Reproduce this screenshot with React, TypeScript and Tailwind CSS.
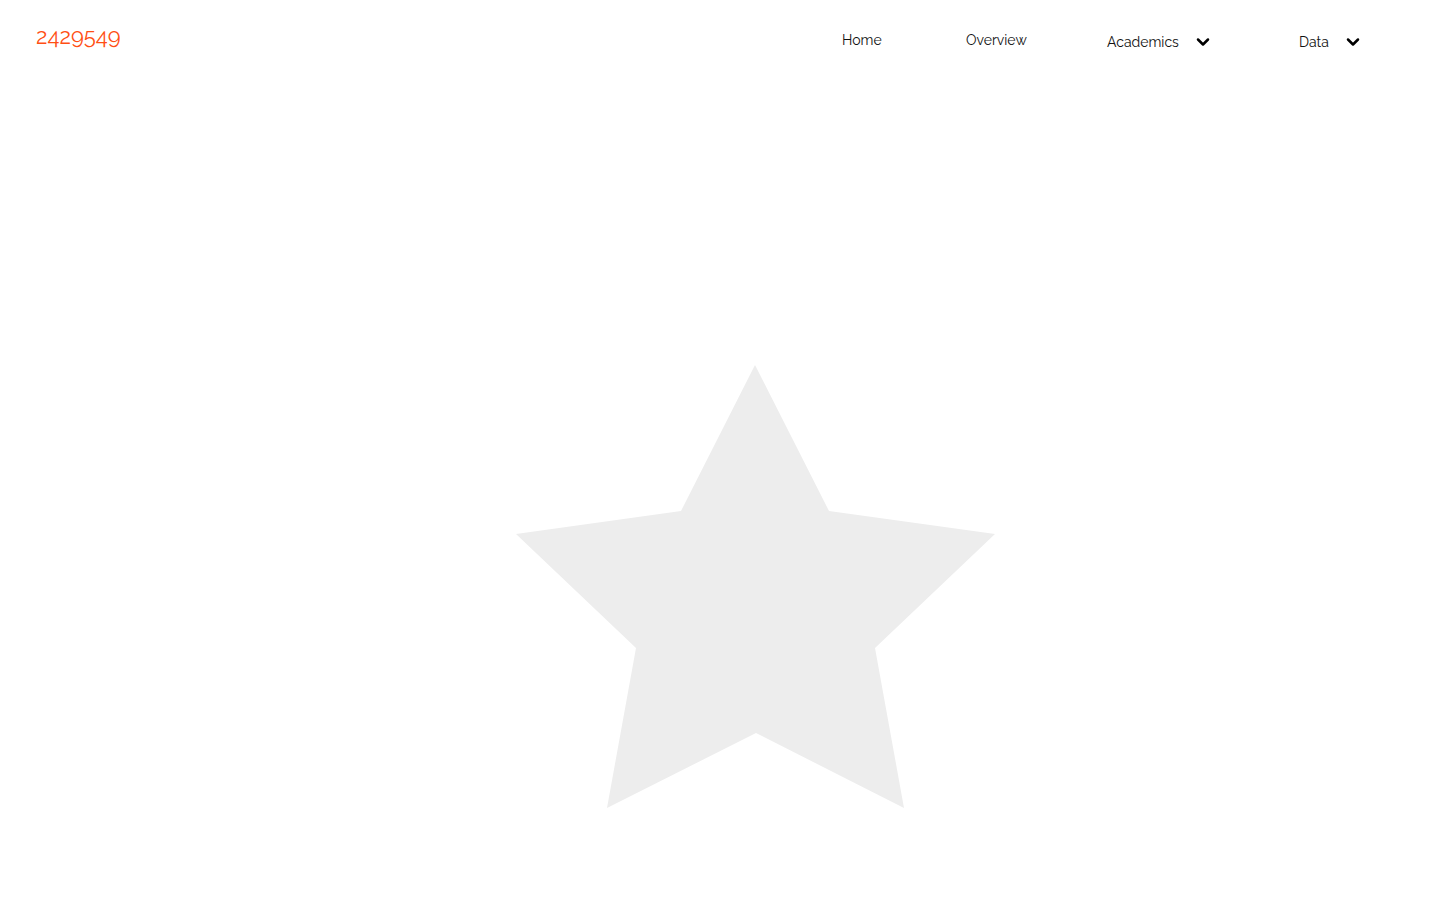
import { ChevronDown } from "lucide-react";

const font = { fontFamily: '"Raleway", Lato, "Open Sans", sans-serif' };

function NavItem({ label, width, dropdown }: { label: string; width: string; dropdown?: boolean }) {
  return (
    <div className={`flex items-center ${width}`}>
      <span className={`text-[14px] text-[#111] ${dropdown ? "pt-1" : ""}`}>{label}</span>
      {dropdown && (
        <ChevronDown className="ml-[14px] mt-1 text-black" size={20} strokeWidth={3} />
      )}
    </div>
  );
}

export default function App() {
  return (
    <div className="min-h-[900px] w-full bg-white" style={font}>
      <header className="flex h-[80px] items-center pl-[36px]">
        <span className="mb-[8px] text-[22px] font-normal text-[#ff4f14]">2429549</span>
        <nav className="ml-auto flex items-center pr-[40px]">
          <NavItem label="Home" width="w-[124px]" />
          <NavItem label="Overview" width="w-[141px]" />
          <NavItem label="Academics" width="w-[192px]" dropdown />
          <NavItem label="Data" width="w-[101px]" dropdown />
        </nav>
      </header>

      <main className="pl-[516px] pt-[285px]">
        <svg width="479" height="443" viewBox="516 365 479 443" aria-hidden>
          <polygon
            points="755,365 829,511 995,534 875,648 904,808 756,733 607,808 636,648 516,534 681,511"
            fill="#ededed"
          />
        </svg>
      </main>
    </div>
  );
}
